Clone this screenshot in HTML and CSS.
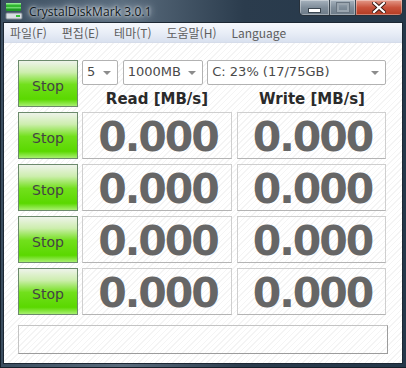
FILE: index.html
```html
<!DOCTYPE html>
<html lang="ko">
<head>
  <meta charset="UTF-8" />
  <title>CrystalDiskMark 3.0.1</title>
  <link rel="stylesheet" href="styles.css">
</head>
<body>

  <div class="window">
    <div class="titlebar">
      <svg class="app-icon" width="18" height="18" viewBox="0 0 18 18">
        <rect x="1" y="1" width="15" height="4" rx="1" fill="#2fb52f"/>
        <rect x="1" y="1" width="15" height="1.5" fill="#8ee88e"/>
        <rect x="1" y="5" width="15" height="4" rx="1" fill="#1f9a24"/>
        <rect x="1" y="5" width="15" height="1.5" fill="#6fd86f"/>
        <rect x="1" y="11" width="16" height="6" rx="1" fill="#d8dde2" stroke="#7d8790" stroke-width="1"/>
        <rect x="11" y="13" width="4" height="2" fill="#38c038"/>
      </svg>
      <span class="title">CrystalDiskMark 3.0.1</span>
      <div class="caption">
        <span class="cap-btn cap-min"><i></i></span>
        <span class="cap-btn cap-max"><i></i></span>
        <span class="cap-btn cap-close">
          <svg width="14" height="11" viewBox="0 0 14 11">
            <path d="M2 1 L12 10 M12 1 L2 10" stroke="#3a1a14" stroke-width="4" stroke-linecap="square"/>
            <path d="M2 1 L12 10 M12 1 L2 10" stroke="#fff" stroke-width="2.2" stroke-linecap="square"/>
          </svg>
        </span>
      </div>
    </div>

    <div class="client">
      <div class="menubar">
        <span>파일(F)</span>
        <span>편집(E)</span>
        <span>테마(T)</span>
        <span>도움말(H)</span>
        <span>Language</span>
      </div>

      <div class="main">
        <div class="grid">
          <button class="stop">Stop</button>
          <div class="top">
            <div class="combos">
              <div class="combo combo-count">5</div>
              <div class="combo combo-size">1000MB</div>
              <div class="combo combo-drive">C: 23% (17/75GB)</div>
            </div>
            <div class="heads">
              <div>Read [MB/s]</div>
              <div>Write [MB/s]</div>
            </div>
          </div>

          <button class="stop">Stop</button>
          <div class="result">0.000</div>
          <div class="result result-write">0.000</div>

          <button class="stop">Stop</button>
          <div class="result">0.000</div>
          <div class="result result-write">0.000</div>

          <button class="stop">Stop</button>
          <div class="result">0.000</div>
          <div class="result result-write">0.000</div>

          <button class="stop">Stop</button>
          <div class="result">0.000</div>
          <div class="result result-write">0.000</div>
        </div>

        <div class="status"></div>
      </div>
    </div>
  </div>

</body>
</html>
```

FILE: styles.css
```css
body {
  margin: 0;
  background: #1e2b38;
}

.window {
  width: 406px;
  height: 368px;
  box-sizing: border-box;
  display: flex;
  flex-direction: column;
  padding: 0 3px 3px 2px;
  background: linear-gradient(to right, #3a4d5f, #5a6c7d 30%, #2b3c4d 60%, #25384a);
  border-left: 1px solid #15202b;
  border-bottom: 1px solid #15202b;
}

/* title bar */
.titlebar {
  height: 22px;
  display: flex;
  align-items: center;
  position: relative;
}

.app-icon {
  margin: 0 6px 0 2px;
}

.title {
  font-family: "Open Sans", "Noto Sans", sans-serif;
  font-size: 12px;
  color: #101820;
  text-shadow: 0 0 6px #dfe6ee, 0 0 10px #c9d3de, 0 0 3px #fff;
  letter-spacing: 0.1px;
}

.caption {
  position: absolute;
  top: 0;
  right: 0;
  display: flex;
  border: 1px solid #27313b;
  border-top: none;
  border-radius: 0 0 5px 5px;
  overflow: hidden;
  height: 15px;
}

.cap-btn {
  display: flex;
  align-items: center;
  justify-content: center;
  height: 15px;
  box-shadow: inset 0 0 0 1px rgba(255, 255, 255, 0.35);
}

.cap-min {
  width: 29px;
  background: linear-gradient(#a7b3be, #7f8d9a 50%, #6c7a87);
  border-right: 1px solid #3b4650;
}

.cap-min i {
  display: block;
  width: 11px;
  height: 3px;
  margin-top: 5px;
  background: #fff;
  border: 1px solid #3b4650;
}

.cap-max {
  width: 25px;
  background: linear-gradient(#a7b3be, #7f8d9a 50%, #6c7a87);
  border-right: 1px solid #3b4650;
}

.cap-max i {
  display: block;
  width: 8px;
  height: 5px;
  border: 2px solid #9aa5af;
  outline: 1px solid #6a7682;
}

.cap-close {
  width: 46px;
  background: linear-gradient(#e49a8a, #c9533c 50%, #b23a22);
}

/* client area */
.client {
  flex: 1;
  display: flex;
  flex-direction: column;
  border: 1px solid #1c2733;
  background: repeating-linear-gradient(135deg, #fff 0 3px, #f4f4f4 3px 4px);
}

.menubar {
  height: 19px;
  display: flex;
  align-items: center;
  gap: 15px;
  padding-left: 6px;
  background: linear-gradient(#f6f8fc, #e9eef7 50%, #d9e1ef);
  border-bottom: 1px solid #d5dcea;
  font-family: "Noto Sans CJK KR", "Noto Sans", sans-serif;
  font-size: 12px;
  color: #5e5e5e;
}

.main {
  padding: 17px 0 0 14px;
}

.grid {
  display: grid;
  grid-template-columns: 60px 150px 150px;
  grid-auto-rows: 47px;
  column-gap: 4px;
  row-gap: 5px;
}

.stop {
  margin: 0;
  padding: 4px 0 0;
  border: 1px solid #6c8a6c;
  background: linear-gradient(#eef3ea, #cdeeae 25%, #72e01c 52%, #5ad800 85%, #a8f070);
  font-family: "DejaVu Sans", sans-serif;
  font-size: 14px;
  color: #444;
}

.top {
  grid-column: 2 / 4;
  display: flex;
  flex-direction: column;
  justify-content: space-between;
}

.combos {
  display: flex;
  height: 25px;
}

.combo {
  box-sizing: border-box;
  position: relative;
  height: 25px;
  padding: 3px 0 0 4px;
  border: 1px solid #b2b2b2;
  border-radius: 2px;
  background: #fff;
  font-family: "DejaVu Sans", sans-serif;
  font-size: 13px;
  color: #4a4a4a;
}

.combo::after {
  content: "";
  position: absolute;
  right: 6px;
  top: 10px;
  border: 4px solid transparent;
  border-top: 4px solid #8c8c8c;
  border-bottom: none;
}

.combo-count { width: 36px; }
.combo-size { width: 81px; margin-left: 5px; }
.combo-drive { width: 180px; margin-left: 4px; }

.heads {
  display: grid;
  grid-template-columns: 150px 150px;
  column-gap: 5px;
  font-family: "DejaVu Sans", sans-serif;
  font-weight: bold;
  font-size: 15px;
  color: #2a2a2a;
  text-align: center;
  line-height: 18px;
  margin-bottom: -1px;
}

.result {
  box-sizing: border-box;
  border: 1px solid #cfcfcf;
  border-bottom-color: #b4b4b4;
  display: flex;
  align-items: center;
  justify-content: center;
  font-family: "DejaVu Sans", sans-serif;
  font-weight: bold;
  font-size: 41px;
  letter-spacing: -2px;
  color: #666;
  padding: 2px 0 0 2px;
}

.result-write {
  margin-left: 1px;
}

.status {
  box-sizing: border-box;
  width: 370px;
  height: 29px;
  margin-top: 10px;
  border: 1px solid #c4c4c4;
  border-right-color: #9c9c9c;
  border-bottom-color: #9c9c9c;
}
```
